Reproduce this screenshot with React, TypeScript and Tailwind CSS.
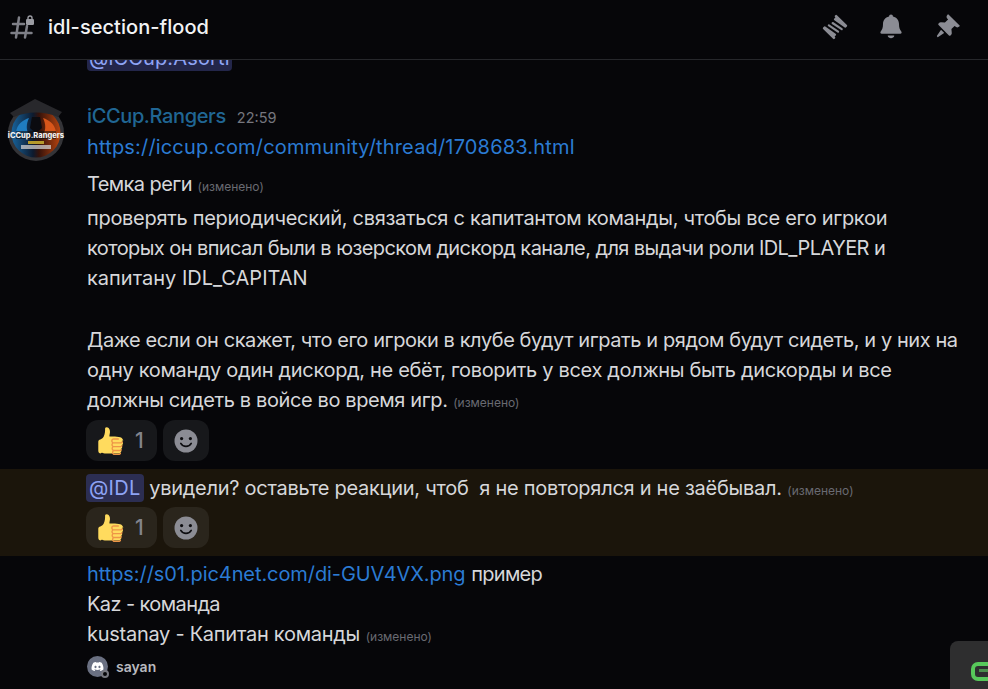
import { FaDiscord } from 'react-icons/fa6';

const Thumb = () => (
  <svg width="28" height="28" viewBox="0 0 36 36">
    <path
      fill="#FFDB5E"
      d="M34.956 17.916c0-.503-.12-.975-.321-1.404-1.341-4.326-7.619-4.01-16.549-4.221-1.493-.035-.639-1.798-.115-5.668.341-2.517-1.282-6.382-4.01-6.382-4.498 0-.171 3.548-4.148 12.322-2.125 4.688-6.875 2.062-6.875 6.771v10.719c0 1.833.18 3.595 2.758 3.885C8.195 32.219 7.633 34 11.238 34h18.044c1.838 0 3.333-1.496 3.333-3.334 0-.762-.267-1.456-.698-2.018 1.02-.571 1.72-1.649 1.72-2.899 0-.76-.266-1.454-.696-2.015 1.023-.57 1.725-1.649 1.725-2.901 0-1.04-.48-1.958-1.217-2.57.34-.49.507-1.1.507-1.347z"
    />
    <path
      fill="#EE9547"
      d="M23.02 21.249h8.604c1.17 0 2.268-.626 2.866-1.633.246-.415.109-.952-.307-1.199-.415-.247-.952-.108-1.199.307-.283.479-.806.775-1.361.775h-8.81c-.873 0-1.583-.71-1.583-1.583s.71-1.583 1.583-1.583H28.7c.483 0 .875-.392.875-.875s-.392-.875-.875-.875h-5.888c-1.838 0-3.333 1.495-3.333 3.333 0 1.025.475 1.932 1.205 2.544-.615.605-.998 1.445-.998 2.373 0 1.028.478 1.938 1.212 2.549-.611.604-.99 1.441-.99 2.367 0 1.12.559 2.108 1.409 2.713-.524.589-.852 1.356-.852 2.204 0 1.838 1.495 3.333 3.333 3.333h5.484c1.17 0 2.269-.625 2.867-1.632.247-.415.11-.952-.305-1.199-.416-.245-.953-.11-1.199.305-.285.479-.808.776-1.363.776h-5.484c-.873 0-1.583-.71-1.583-1.583s.71-1.583 1.583-1.583h6.506c1.17 0 2.27-.626 2.867-1.633.247-.416.11-.953-.305-1.199-.419-.251-.954-.11-1.199.305-.289.487-.799.777-1.363.777h-7.063c-.873 0-1.583-.711-1.583-1.584s.71-1.583 1.583-1.583h8.091c1.17 0 2.269-.625 2.867-1.632.247-.415.11-.952-.305-1.199-.417-.246-.953-.11-1.199.305-.289.486-.799.776-1.363.776H23.02c-.873 0-1.583-.71-1.583-1.583s.709-1.583 1.583-1.583z"
    />
  </svg>
);

const Smile = () => (
  <svg width="24" height="24" viewBox="0 0 24 24">
    <circle cx="12" cy="12" r="11.500" fill="#8b8c94" />
    <circle cx="7.600" cy="9.600" r="1.600" fill="#0d0d10" />
    <circle cx="16.400" cy="9.600" r="1.600" fill="#0d0d10" />
    <path d="M6.800 14.400c1.100 2 3 3 5.200 3s4.100-1 5.200-3" fill="none" stroke="#0d0d10" strokeWidth="1.700" strokeLinecap="round" />
  </svg>
);

const Reactions = ({ tint }: { tint: string }) => (
  <div className="flex gap-[6px] h-[41px] -ml-[1px]">
    <div className={`w-[71px] rounded-[12px] flex items-center pl-[10px] gap-[11px] ${tint}`}>
      <Thumb />
      <span className="text-[21px] font-medium tracking-normal text-[#83848c]">1</span>
    </div>
    <div className={`w-[46px] rounded-[12px] flex items-center justify-center ${tint}`}>
      <Smile />
    </div>
  </div>
);

const Edited = () => <span className="text-[12px] tracking-normal text-[#696a72]">(изменено)</span>;

const Avatar = () => (
  <svg width="60" height="64" viewBox="0 0 60 64" className="shrink-0">
    <defs>
      <linearGradient id="flame" x1="0" x2="1" y1="0" y2="0">
        <stop offset="0" stopColor="#17639c" />
        <stop offset="0.44" stopColor="#0d1a2e" />
        <stop offset="0.56" stopColor="#35120a" />
        <stop offset="1" stopColor="#b8440f" />
      </linearGradient>
    </defs>
    <circle cx="29" cy="35" r="28" fill="#343438" />
    <circle cx="29" cy="35" r="24.500" fill="url(#flame)" />
    <path d="M36 20c6 2 12 6 13 14-3 5-9 6-13 3 3-5 3-11 0-17z" fill="#d9561a" />
    <path d="M22 20c-6 2-12 6-13 14 3 5 9 6 13 3-3-5-3-11 0-17z" fill="#1f7cc0" />
    <path d="M3 15 28 1l27 13-4 5C38 13 20 13 7 19z" fill="#28282c" />
    <path d="M25 19h8l2 11-6 5-6-5z" fill="#0b0b10" />
    <rect x="9" y="33" width="40" height="8" fill="#111" opacity="0.6" />
    <text x="29" y="40" textAnchor="middle" fontSize="7.500" fontWeight="800" fill="#f0f0f0" fontFamily="Inter, sans-serif">
      iCCup.Rangers
    </text>
    <rect x="21" y="43" width="16" height="3" fill="#b59a2a" />
    <rect x="14" y="47" width="30" height="4" fill="#cfcfcf" opacity="0.75" />
  </svg>
);

export default function App() {
  return (
    <div className="relative w-[988px] h-[689px] overflow-hidden bg-[#060609] text-[#d6d7da] font-['Inter','Noto_Sans',sans-serif]">
      {/* Header */}
      <div className="h-[60px] flex items-center border-b border-[#26272b] pl-[10px] pr-[28px] pb-[5px] relative z-10 bg-[#060609]">
        <svg width="26" height="24" viewBox="0 0 26 24" className="text-[#7e7f87]">
          <path
            d="M3 9h11M1.500 18h20M9 2.500 6 22.500M17 11 15 22.500"
            stroke="currentColor"
            strokeWidth="2.500"
            strokeLinecap="round"
            fill="none"
          />
          <rect x="16" y="4" width="8" height="6" rx="1.200" fill="#9b9ca3" />
          <path d="M18 5V3a2 2 0 0 1 4 0v2" stroke="#9b9ca3" strokeWidth="1.400" fill="none" />
        </svg>
        <h1 className="ml-[12px] text-[20px] font-medium text-[#f2f3f5] tracking-[0.05px]">idl-section-flood</h1>
        <div className="ml-auto flex items-center gap-[31px] text-[#8b8c94]">
          <svg width="26" height="26" viewBox="0 0 24 24">
            <path
              fill="currentColor"
              d="M12 2.810a1 1 0 0 1 0-1.410l.36-.36a1 1 0 0 1 1.410 0l9.200 9.200a1 1 0 0 1 0 1.400l-.7.7a1 1 0 0 1-1.300.13l-9.540-6.720a1 1 0 0 1-.08-1.580l1-1L12 2.800ZM12 21.200a1 1 0 0 1 0 1.410l-.35.35a1 1 0 0 1-1.410 0l-9.200-9.190a1 1 0 0 1 0-1.410l.7-.7a1 1 0 0 1 1.300-.12l9.540 6.720a1 1 0 0 1 .07 1.580l-1 1 .35.36ZM15.660 16.800a1 1 0 0 1-1.380.28l-8.490-5.660A1 1 0 1 1 6.900 9.760l8.490 5.650a1 1 0 0 1 .27 1.390ZM17.670 14.800a1 1 0 0 0 1.390-.27 1 1 0 0 0-.28-1.390l-8.490-5.650a1 1 0 0 0-1.100 1.660l8.480 5.650Z"
            />
          </svg>
          <svg width="24" height="26" viewBox="0 0 24 26">
            <path
              fill="currentColor"
              d="M10 2.400a2 2 0 0 1 4 0C17.800 3.200 20 6.300 20 10c0 3.500.8 5.700 2.300 7.500.7.900.3 2.300-1 2.300H2.700c-1.300 0-1.700-1.400-1-2.300C3.200 15.700 4 13.500 4 10c0-3.700 2.200-6.800 6-7.600zM9 21.500h6c.3 0 .4.300.3.500-.5 1.300-1.800 2.200-3.300 2.200s-2.800-.9-3.300-2.200c-.100-.2 0-.5.300-.5z"
            />
          </svg>
          <svg width="26" height="26" viewBox="0 0 24 24">
            <path
              fill="currentColor"
              d="M19.380 11.380a3 3 0 0 0 4.240 0l.03-.03a.5.5 0 0 0 0-.7L13.350.35a.5.5 0 0 0-.7 0l-.03.03a3 3 0 0 0 0 4.240L13 5l-2.920 2.920-3.650-.34a2 2 0 0 0-1.600.58l-.62.63a1 1 0 0 0 0 1.420l9.580 9.580a1 1 0 0 0 1.420 0l.63-.63a2 2 0 0 0 .58-1.600l-.34-3.640L19 11l.38.38ZM9.070 17.070a.5.5 0 0 1-.08.77l-5.150 3.430a.5.5 0 0 1-.63-.06l-.42-.42a.5.5 0 0 1-.06-.63L6.160 15a.5.5 0 0 1 .77-.08l2.140 2.140Z"
            />
          </svg>
        </div>
      </div>

      {/* Message list */}
      <div className="-mt-[15px]">
        <div className="pl-[87px] h-[26px] leading-[26px] text-[20px]">
          <span className="inline-block rounded-[4px] bg-[#23264a] text-[#8fa4f5] px-[2px] leading-[26px] tracking-[0.15px]">@iCCup.Asorti</span>
        </div>

        <div className="mt-[27px] flex">
          <div className="w-[87px] pl-[7px] shrink-0">
            <Avatar />
          </div>
          <div className="text-[20px] leading-[30px] whitespace-nowrap">
            <div className="flex items-baseline gap-[11px] mt-[3px]">
              <span className="text-[#206694] font-medium tracking-[-0.38px]">iCCup.Rangers</span>
              <span className="text-[14.500px] text-[#75767e]">22:59</span>
            </div>
            <a className="block text-[#2b7bd3] tracking-[0.17px] -mt-[1px]">https://iccup.com/community/thread/1708683.html</a>
            <p className="mt-[7px]">
              <span className="tracking-[-0.6px]">Темка реги</span> <Edited />
            </p>
            <p className="mt-[1px]">
              <span className="tracking-[-0.3px]">проверять периодический, связаться с капитантом команды, чтобы все его игркои</span>
              <br />
              <span className="tracking-[-0.58px]">которых он вписал были в юзерском дискорд канале, для выдачи роли IDL_PLAYER и</span>
              <br />
              капитану IDL_CAPITAN
            </p>
            <p className="mt-[32px]">
              <span className="tracking-[-0.42px]">Даже если он скажет, что его игроки в клубе будут играть и рядом будут сидеть, и у них на</span>
              <br />
              <span className="tracking-[-0.32px]">одну команду один дискорд, не ебёт, говорить у всех должны быть дискорды и все</span>
              <br />
              <span className="tracking-[-0.39px]">должны сидеть в войсе во время игр.</span> <Edited />
            </p>
            <div className="mt-[2px]">
              <Reactions tint="bg-[#17181b]" />
            </div>
          </div>
        </div>

        <div className="mt-[8px] h-[87px] bg-[#1b150b] pl-[87px] pt-[4px]">
          <p className="text-[20px] leading-[30px] whitespace-pre-wrap">
            <span className="rounded-[4px] bg-[#2c2e52] text-[#8fa4f5] -ml-[1px] px-[3px] py-[2px] tracking-[0.3px]">@IDL</span>{' '}
            <span className="tracking-[-0.27px]">увидели? оставьте реакции, чтоб  я не повторялся и не заёбывал.</span> <Edited />
          </p>
          <div className="mt-[1px]">
            <Reactions tint="bg-[#2a251c]" />
          </div>
        </div>

        <div className="pl-[87px] pt-[3px] text-[20px] leading-[30px]">
          <p>
            <a className="text-[#2b7bd3] tracking-[-0.08px]">https://s01.pic4net.com/di-GUV4VX.png</a> <span className="tracking-[-0.7px]">пример</span>
          </p>
          <p className="tracking-[-0.6px]">Kaz - команда</p>
          <p>
            <span className="tracking-[-0.27px]">kustanay - Капитан команды</span> <Edited />
          </p>
          <div className="mt-[4px] flex items-center gap-[8px]">
            <div className="relative w-[21px] h-[21px] rounded-full bg-[#6a7082] flex items-center justify-center">
              <FaDiscord className="text-white" size={13} />
              <span className="absolute -right-[1px] -bottom-[1px] w-[8px] h-[8px] rounded-full border-2 border-[#77787f] bg-[#060609]" />
            </div>
            <span className="text-[14px] leading-[20px] font-semibold text-[#b8b9bf]">sayan</span>
          </div>
        </div>
      </div>

      {/* Floating widget */}
      <div className="absolute left-[950px] top-[641px] w-[60px] h-[60px] rounded-[8px] bg-[#2e2e2f]">
        <div className="absolute left-[21px] top-[21px] w-[30px] h-[19px] rounded-[7px] border-[4px] border-[#57c85a]">
          <div className="absolute left-[4px] top-[3px] w-[20px] h-[3px] bg-[#4a8f4c]" />
        </div>
      </div>
    </div>
  );
}
